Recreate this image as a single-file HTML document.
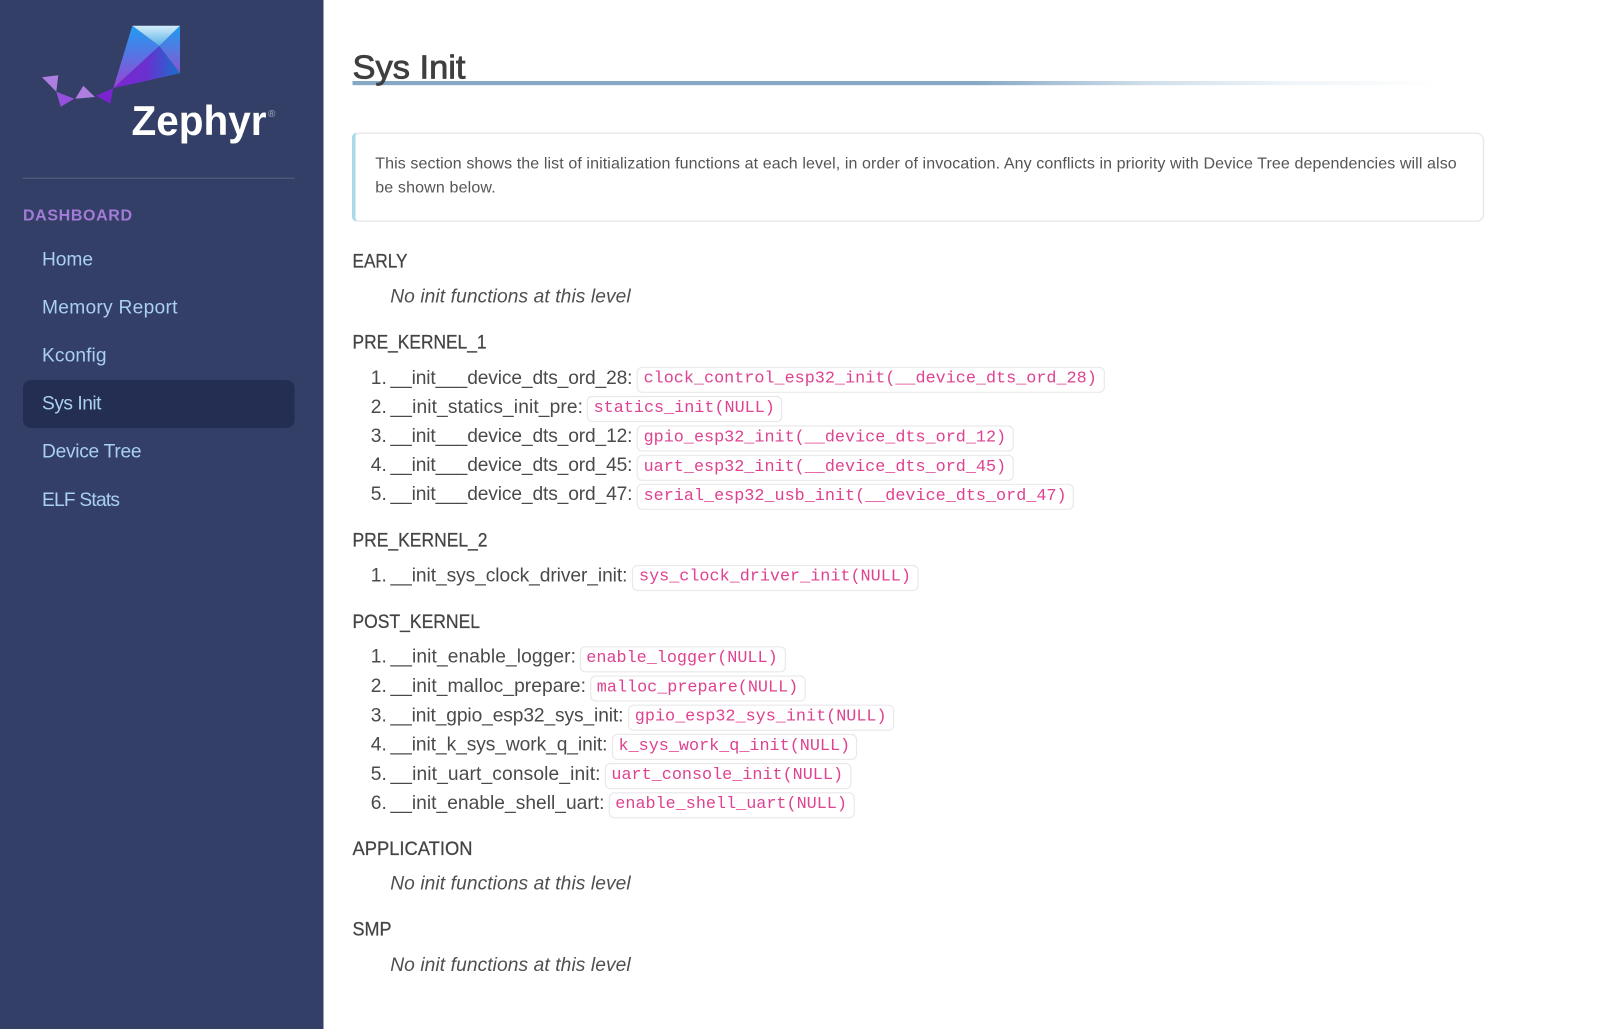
<!DOCTYPE html>
<html lang="en"><head><meta charset="utf-8"><title>Sys Init</title>
<style>
html,body{margin:0;padding:0;background:#fff;width:1598px;height:1029px;overflow:hidden}
svg{display:block}
text{font-family:"Liberation Sans",sans-serif;white-space:pre}
.n{font-size:19.2px;fill:#a9d0f0}
.h{font-size:19.2px;fill:#444;stroke:#444;stroke-width:.25}
.t{font-size:19.2px;fill:#4a4a4a}
.i{font-size:19.2px;fill:#4f4f4f;font-style:italic}
.c{font-family:"Liberation Mono",monospace;font-size:16.8px;fill:#de4290}
.b{fill:#fff;stroke:#e9e9ec;stroke-width:1.2}
.a{font-size:16px;fill:#555}
</style></head><body>
<svg width="1598" height="1029" viewBox="0 0 1598 1029" xmlns="http://www.w3.org/2000/svg">
<defs>
<linearGradient id="u" x1="0" x2="1" y1="0" y2="0"><stop offset="0" stop-color="#86a8c5"/><stop offset=".55" stop-color="#86a8c5"/><stop offset=".70" stop-color="#cfdeea"/><stop offset=".83" stop-color="#f0f5f9"/><stop offset=".97" stop-color="#fff"/></linearGradient>
<linearGradient id="k1" x1="0" x2="0" y1="0" y2="1"><stop offset="0" stop-color="#d3eefa"/><stop offset="1" stop-color="#58aee6"/></linearGradient>
<linearGradient id="k2" x1="0" x2="0" y1="0" y2="1"><stop offset="0" stop-color="#1e9df2"/><stop offset="1" stop-color="#9a45d2"/></linearGradient>
<linearGradient id="k3" x1="0" x2="1" y1="0" y2="0"><stop offset="0" stop-color="#7b26d2"/><stop offset=".5" stop-color="#6a30d0"/><stop offset="1" stop-color="#1670cc"/></linearGradient>
<linearGradient id="k4" x1="0" x2="0" y1="0" y2="1"><stop offset="0" stop-color="#1e9df2"/><stop offset="1" stop-color="#8a55d0"/></linearGradient>
</defs>
<rect x="0" y="0" width="323.5" height="1029" fill="#333f66"/>
<polygon points="132.3,25.7 180,25.7 159.3,46" fill="url(#k1)"/>
<polygon points="132.3,25.7 159.3,46 113.3,88.3" fill="url(#k2)"/>
<polygon points="159.3,46 180,73.3 113.3,88.3" fill="url(#k3)"/>
<polygon points="180,25.7 180,73.3 159.3,46" fill="url(#k4)"/>
<polygon points="42,77.3 58.3,75.3 56.3,91.7" fill="#ae7ee0"/>
<polygon points="56.3,91.7 74.3,98.7 60.7,106.7" fill="#9550dd"/>
<polygon points="83.3,85.7 95,97 75.3,98.7" fill="#ae7ee0"/>
<polygon points="96,95.7 113.3,88.3 110.3,103.7" fill="#7a24d0"/>
<text x="131.500" y="135" font-size="42" font-weight="700" fill="#fff" textLength="135" lengthAdjust="spacingAndGlyphs">Zephyr</text>
<text x="268" y="117" font-size="10" fill="#aab0c0">®</text>
<rect x="23" y="177.5" width="271.500" height="1.5" fill="#4c5877"/>
<text x="23" y="220.7" font-size="16" font-weight="700" fill="#a57bd9" textLength="109">DASHBOARD</text>
<rect x="23" y="380" width="271.500" height="48" rx="8" fill="#232e52"/>
<text class="n" x="42" y="265.7" textLength="51">Home</text>
<text class="n" x="42" y="313.500" textLength="135.500">Memory Report</text>
<text class="n" x="42" y="361.500" textLength="64.500">Kconfig</text>
<text class="n" x="42" y="409.500" textLength="59.500">Sys Init</text>
<text class="n" x="42" y="457.500" textLength="99.500">Device Tree</text>
<text class="n" x="42" y="505.800" textLength="78">ELF Stats</text>

<rect x="352.5" y="81" width="1132" height="4.2" fill="url(#u)"/>
<text x="352.5" y="78.500" font-size="33" fill="#3f3f3f" stroke="#3f3f3f" stroke-width=".8" textLength="113" lengthAdjust="spacingAndGlyphs">Sys Init</text>

<rect x="353" y="133.2" width="1130.5" height="88" rx="7" fill="#fff" stroke="#e8e8ea" stroke-width="1.4"/>
<path d="M357 132.6h-0.5a5 5 0 0 0-4.5 5v79a5 5 0 0 0 4.5 5h.5c-1.300-.5-1.500-2-1.500-4v-81c0-2 .2-3.500 1.500-4z" fill="#a9d9ea"/>
<text class="a" x="375.2" y="168.3" textLength="1081.500">This section shows the list of initialization functions at each level, in order of invocation. Any conflicts in priority with Device Tree dependencies will also</text>
<text class="a" x="375.2" y="192.7" textLength="120.500">be shown below.</text>

<text class="h" x="352.5" y="267.3" textLength="55" lengthAdjust="spacingAndGlyphs">EARLY</text>
<text class="i" x="390.2" y="302.3" textLength="240.500">No init functions at this level</text>

<text class="h" x="352.5" y="348.3" textLength="134" lengthAdjust="spacingAndGlyphs">PRE_KERNEL_1</text>
<text class="t" x="370.8" y="384">1.</text><text class="t" x="390.5" y="384" textLength="242">__init___device_dts_ord_28:</text>
<rect class="b" x="637.3" y="367.3" width="467" height="25" rx="5"/><text class="c" x="643.6" y="382.5">clock_control_esp32_init(__device_dts_ord_28)</text>
<text class="t" x="370.8" y="413">2.</text><text class="t" x="390.5" y="413" textLength="192.500">__init_statics_init_pre:</text>
<rect class="b" x="587.3" y="396.5" width="194.400" height="25" rx="5"/><text class="c" x="593.6" y="411.8">statics_init(NULL)</text>
<text class="t" x="370.8" y="442">3.</text><text class="t" x="390.5" y="442" textLength="242">__init___device_dts_ord_12:</text>
<rect class="b" x="637.3" y="426" width="376" height="25" rx="5"/><text class="c" x="643.6" y="441.6">gpio_esp32_init(__device_dts_ord_12)</text>
<text class="t" x="370.8" y="471">4.</text><text class="t" x="390.5" y="471" textLength="242">__init___device_dts_ord_45:</text>
<rect class="b" x="637.3" y="455.3" width="376" height="25" rx="5"/><text class="c" x="643.6" y="470.8">uart_esp32_init(__device_dts_ord_45)</text>
<text class="t" x="370.8" y="500.2">5.</text><text class="t" x="390.5" y="500.2" textLength="242">__init___device_dts_ord_47:</text>
<rect class="b" x="637.3" y="484.3" width="436" height="25" rx="5"/><text class="c" x="643.6" y="500">serial_esp32_usb_init(__device_dts_ord_47)</text>

<text class="h" x="352.5" y="546.500" textLength="135" lengthAdjust="spacingAndGlyphs">PRE_KERNEL_2</text>
<text class="t" x="370.8" y="581.7">1.</text><text class="t" x="390.5" y="581.7" textLength="237">__init_sys_clock_driver_init:</text>
<rect class="b" x="632.5" y="565.5" width="285.500" height="25" rx="5"/><text class="c" x="639" y="580.700">sys_clock_driver_init(NULL)</text>

<text class="h" x="352.5" y="628" textLength="127.500" lengthAdjust="spacingAndGlyphs">POST_KERNEL</text>
<text class="t" x="370.8" y="662.7">1.</text><text class="t" x="390.5" y="662.7" textLength="185.500">__init_enable_logger:</text>
<rect class="b" x="580.400" y="646.800" width="205" height="25" rx="5"/><text class="c" x="586.3" y="662.2">enable_logger(NULL)</text>
<text class="t" x="370.8" y="692.2">2.</text><text class="t" x="390.5" y="692.2" textLength="195.500">__init_malloc_prepare:</text>
<rect class="b" x="590.700" y="676" width="214.500" height="25" rx="5"/><text class="c" x="596.800" y="691.400">malloc_prepare(NULL)</text>
<text class="t" x="370.8" y="721.4">3.</text><text class="t" x="390.5" y="721.4" textLength="233">__init_gpio_esp32_sys_init:</text>
<rect class="b" x="628.600" y="705.200" width="265" height="25" rx="5"/><text class="c" x="634.800" y="720.600">gpio_esp32_sys_init(NULL)</text>
<text class="t" x="370.8" y="750.6">4.</text><text class="t" x="390.5" y="750.6" textLength="217">__init_k_sys_work_q_init:</text>
<rect class="b" x="612.500" y="734.400" width="244" height="25" rx="5"/><text class="c" x="618.500" y="749.800">k_sys_work_q_init(NULL)</text>
<text class="t" x="370.8" y="779.8">5.</text><text class="t" x="390.5" y="779.8" textLength="210">__init_uart_console_init:</text>
<rect class="b" x="605.400" y="763.600" width="245.500" height="25" rx="5"/><text class="c" x="611.400" y="779">uart_console_init(NULL)</text>
<text class="t" x="370.8" y="809">6.</text><text class="t" x="390.5" y="809" textLength="214">__init_enable_shell_uart:</text>
<rect class="b" x="609.300" y="792.800" width="245" height="25" rx="5"/><text class="c" x="615.300" y="808.200">enable_shell_uart(NULL)</text>

<text class="h" x="352.5" y="855" textLength="120" lengthAdjust="spacingAndGlyphs">APPLICATION</text>
<text class="i" x="390.2" y="889.6" textLength="240.500">No init functions at this level</text>
<text class="h" x="352.5" y="935.7" textLength="39" lengthAdjust="spacingAndGlyphs">SMP</text>
<text class="i" x="390.2" y="971" textLength="240.500">No init functions at this level</text>
</svg>
</body></html>
